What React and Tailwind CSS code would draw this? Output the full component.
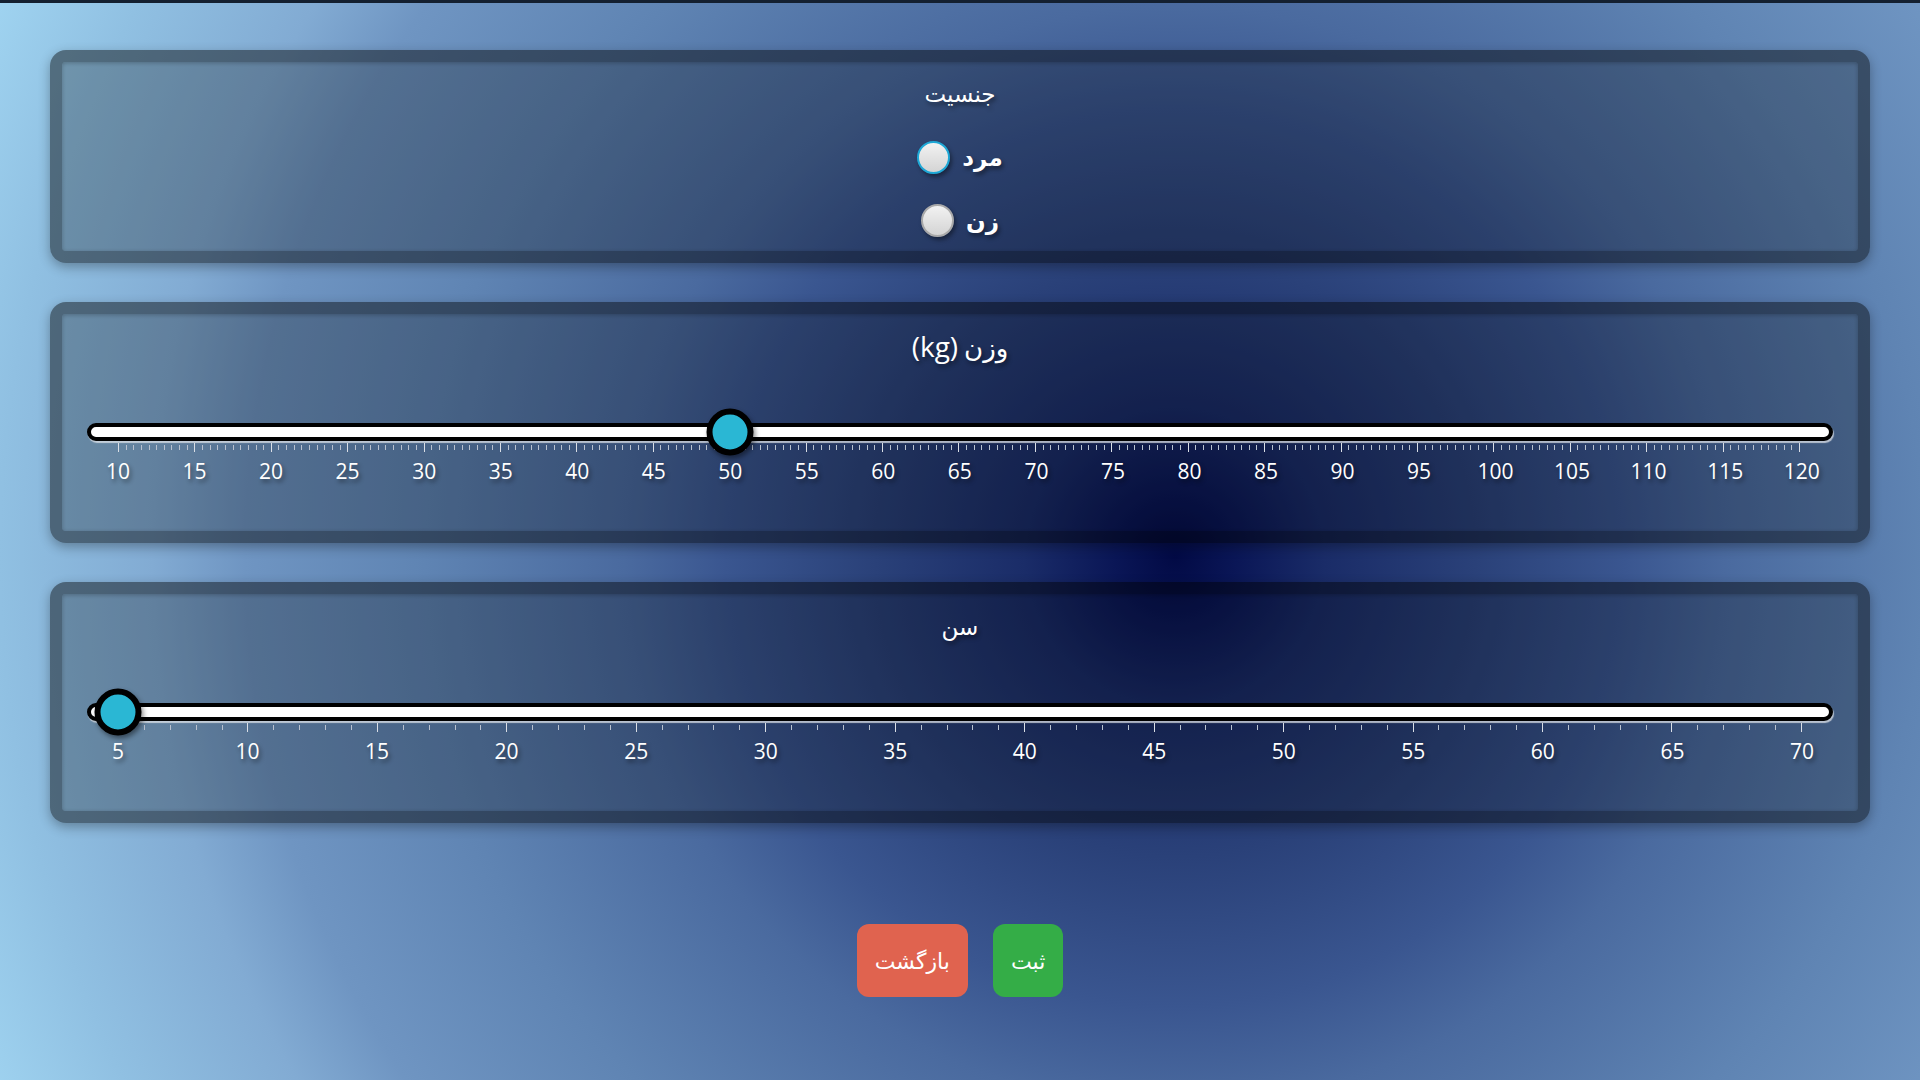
import React from "react";

const font = "font-['Open_Sans','DejaVu_Sans',sans-serif]";
const shadowText = "[text-shadow:2px_3px_4px_rgba(0,0,0,0.45)]";

function Card({ children, className = "" }) {
  return (
    <section
      className={`mx-[50px] rounded-[16px] border-[12px] border-black/45 bg-black/25 bg-clip-padding shadow-[0_4px_12px_rgba(0,0,0,0.3)] inset-shadow-[0_1px_4px_rgba(0,0,0,0.25)] ${className}`}
    >
      {children}
    </section>
  );
}

function Title({ children }) {
  return (
    <h2 dir="rtl" className={`h-8 text-center text-[23px] leading-8 text-white ${shadowText}`}>
      {children}
    </h2>
  );
}

function Radio({ label, focused }) {
  return (
    <label className="flex h-[44px] items-center justify-center gap-[12px]">
      <span
        className={`h-[33px] w-[33px] rounded-full border-2 bg-gradient-to-b from-[#f2f2f2] to-[#d4d4d4] shadow-[2px_3px_4px_rgba(0,0,0,0.4)] ${
          focused ? "border-[#1ea8d6]" : "border-[#a9a9a9]"
        }`}
      />
      <span className={`text-[23px] font-bold leading-8 text-white ${shadowText}`}>{label}</span>
    </label>
  );
}

function Slider({ min, max, step, value }) {
  const count = Math.round((max - min) / step) + 1;
  const ticks = Array.from({ length: count }, (_, i) => min + i * step);
  const labels = [];
  for (let v = min; v <= max; v += 5) labels.push(v);
  const pct = ((value - min) / (max - min)) * 100;

  return (
    <div className="px-[25px]">
      <div className="relative">
        <div className="h-[18px] rounded-full border-4 border-black bg-white shadow-[1px_2px_1px_rgba(225,230,235,0.75)]" />
        <div className="absolute inset-y-0 left-[31px] right-[31px]">
          <div
            className="absolute top-1/2 h-[47px] w-[47px] -translate-x-1/2 -translate-y-1/2 rounded-full border-[6px] border-black bg-[#2ab7d4] shadow-[2px_3px_5px_rgba(0,0,0,0.45)]"
            style={{ left: `${pct}%` }}
          />
        </div>
      </div>
      <div className="mx-[31px] mt-[2px] flex h-[9px] items-center justify-between">
        {ticks.map((v) => (
          <span
            key={v}
            className={`w-px ${v % 5 === 0 ? "h-[9px] bg-[#d9dee6]" : "h-[5px] bg-[#b8c1cf]"}`}
          />
        ))}
      </div>
      <div className="mx-[31px] mt-[5px] flex justify-between">
        {labels.map((v) => (
          <div key={v} className="flex w-0 justify-center">
            <span className={`whitespace-nowrap text-[21px] leading-7 text-white ${shadowText}`}>{v}</span>
          </div>
        ))}
      </div>
    </div>
  );
}

export default function App() {
  return (
    <main
      className={`min-h-screen w-full overflow-hidden bg-[radial-gradient(circle_at_1175px_557px,#020a45_0px,#0a1656_60px,#1a2c68_150px,#2a4179_300px,#3a5690_450px,#4a6a9f_550px,#5f84b3_750px,#6f95c2_930px,#82abd3_1022px,#90c0e2_1175px,#9fd3f0_1300px)] ${font}`}
    >
      <div className="h-[3px] bg-[#142030]" />
      <div className="flex flex-col gap-[39px] pt-[47px]">
        <Card className="pb-[9px] pt-[15px]">
          <Title>جنسیت</Title>
          <div className="mt-[26px] flex flex-col gap-[19px]">
            <Radio label="مرد" focused />
            <Radio label="زن" />
          </div>
        </Card>

        <Card className="pb-[46px] pt-[16px]">
          <Title>
            <span className="text-[26px] leading-8 tracking-[3px]">وزن</span>{" "}
            <span className="text-[28px] leading-8">(kg)</span>
          </Title>
          <div className="mt-[61px]">
            <Slider min={10} max={120} step={0.5} value={50} />
          </div>
        </Card>

        <Card className="pb-[46px] pt-[16px]">
          <Title>سن</Title>
          <div className="mt-[61px]">
            <Slider min={5} max={70} step={1} value={5} />
          </div>
        </Card>
      </div>

      <div className="mt-[101px] flex justify-center gap-[25px]">
        <button className="h-[73px] rounded-[12px] bg-[#e0634f] px-[18px] text-[22px] text-white">
          بازگشت
        </button>
        <button className="h-[73px] rounded-[12px] bg-[#34ad47] px-[18px] text-[22px] text-white">
          ثبت
        </button>
      </div>
    </main>
  );
}
